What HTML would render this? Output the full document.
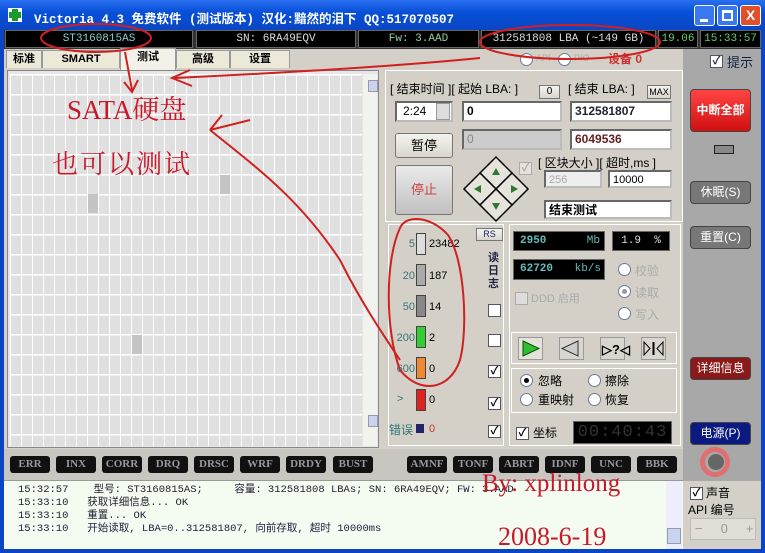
<!DOCTYPE html>
<html><head><meta charset="utf-8"><style>
*{margin:0;padding:0;box-sizing:border-box}
body{width:765px;height:553px;overflow:hidden;background:#d4d0c8;font-family:"Liberation Sans","Noto Sans CJK SC",sans-serif;font-size:12px;position:relative}
.a{position:absolute}
.blk{position:absolute;background:#000;color:#bbb;font-family:"Liberation Mono","Noto Sans CJK SC",monospace;font-size:11px;text-align:center;line-height:17px;height:18px;border:1px solid #666}
.tab{position:absolute;top:50px;height:18px;background:#ece9d8;border:1px solid #999;border-bottom:none;font-weight:bold;font-size:11px;text-align:center;line-height:17px}
.inp{position:absolute;background:#fff;border:2px inset #bbb;font-weight:bold;font-size:12px;line-height:16px;padding-left:3px}
.btn{position:absolute;background:linear-gradient(#f4f4f0,#d8d6ce);border:1px solid #777;border-radius:3px;text-align:center;font-size:13px}
.rb{position:absolute;border-radius:4px;color:#fff;text-align:center;font-size:12px;border:1px solid #444}
.st{position:absolute;top:456px;height:17px;width:40px;background:#111;border-radius:3px;color:#999;font-weight:bold;font-family:"Liberation Serif",serif;font-size:11px;text-align:center;line-height:17px}
.rad{position:absolute;width:13px;height:13px;border-radius:50%;background:#fff;border:1px solid #6a7a9a}
.cb{position:absolute;width:13px;height:13px;background:#fff;border:1px solid #556;font-size:11px;line-height:11px;text-align:center;font-weight:bold}
.red{position:absolute;color:#c8182a;font-family:"Liberation Serif","Noto Serif CJK SC",serif}
</style></head><body>
<div class="a" style="left:0;top:0;width:765px;height:30px;background:linear-gradient(#2a6ff0,#0750d8 40%,#0a46c4)"></div>
<div class="a" style="left:8px;top:8px;width:14px;height:14px;background:#fff"></div>
<div class="a" style="left:12px;top:9px;width:6px;height:12px;background:#1a9a2a"></div>
<div class="a" style="left:9px;top:12px;width:12px;height:6px;background:#1a9a2a"></div>
<div class="a" style="left:34px;top:8px;color:#fff;font-weight:bold;font-size:12.5px;font-family:'Liberation Mono','Noto Sans CJK SC',monospace;white-space:nowrap">Victoria 4.3 免费软件 (测试版本) 汉化:黯然的泪下 QQ:517070507</div>
<div class="a" style="left:694px;top:5px;width:21px;height:21px;background:#3a78f0;border:1px solid #fff;border-radius:3px"><div class="a" style="left:5px;top:13px;width:8px;height:3px;background:#fff"></div></div>
<div class="a" style="left:717px;top:5px;width:21px;height:21px;background:#3a78f0;border:1px solid #fff;border-radius:3px"><div class="a" style="left:4px;top:4px;width:11px;height:11px;border:2px solid #fff;border-top-width:3px"></div></div>
<div class="a" style="left:740px;top:5px;width:21px;height:21px;background:#e0502a;border:1px solid #fff;border-radius:3px;color:#fff;font-weight:bold;text-align:center;line-height:19px;font-size:14px">X</div>
<div class="a" style="left:0;top:30px;width:4px;height:523px;background:#0a46c4"></div>
<div class="a" style="left:761px;top:30px;width:4px;height:523px;background:#0a46c4"></div>
<div class="a" style="left:0;top:549px;width:765px;height:4px;background:#0a46c4"></div>
<div class="a" style="left:4px;top:30px;width:757px;height:19px;background:#333"></div>
<div class="blk" style="left:5px;top:30px;width:188px;color:#8cc">ST3160815AS</div>
<div class="blk" style="left:196px;top:30px;width:160px;color:#ddd">SN: 6RA49EQV</div>
<div class="blk" style="left:358px;top:30px;width:121px;color:#9c9">Fw: 3.AAD</div>
<div class="blk" style="left:481px;top:30px;width:175px;color:#ddd">312581808 LBA (~149 GB)</div>
<div class="blk" style="left:658px;top:30px;width:40px;color:#6c6">19.06</div>
<div class="blk" style="left:700px;top:30px;width:61px;color:#6c6">15:33:57</div>
<div class="tab" style="left:6px;width:36px">标准</div>
<div class="tab" style="left:42px;width:78px">SMART</div>
<div class="tab" style="left:120px;width:56px;top:48px;height:22px;background:#f4f2e8">测试</div>
<div class="tab" style="left:176px;width:54px">高级</div>
<div class="tab" style="left:230px;width:60px">设置</div>
<div class="rad" style="left:520px;top:53px"></div><div class="a" style="left:536px;top:53px;color:#aaa;font-size:9px">API</div>
<div class="rad" style="left:558px;top:53px"></div><div class="a" style="left:574px;top:53px;color:#aaa;font-size:9px">PIO</div>
<div class="a" style="left:608px;top:50px;color:#c33;font-weight:bold;font-size:12px">设备 0</div>
<div class="a" style="left:683px;top:49px;width:78px;height:432px;background:#a8a8a8"></div>
<div class="cb" style="left:710px;top:55px;color:#224">✓</div><div class="a" style="left:727px;top:52px;color:#124;font-size:13px">提示</div>
<div class="a" style="left:7px;top:70px;width:372px;height:378px;border:1px solid #888;background:#e6e6e6"></div>
<div class="a" style="left:10px;top:74px;width:352px;height:372px;background-color:#e0e0e0;background-image:linear-gradient(90deg,#fff 1px,transparent 1px),linear-gradient(#fff 1.5px,transparent 1.5px);background-size:11px 100%,100% 20px"></div>
<div class="a" style="left:220px;top:175px;width:10px;height:19px;background:#c4c4c4"></div>
<div class="a" style="left:88px;top:194px;width:10px;height:19px;background:#c4c4c4"></div>
<div class="a" style="left:132px;top:335px;width:10px;height:19px;background:#c4c4c4"></div>
<div class="a" style="left:363px;top:74px;width:14px;height:372px;background:#f2f2ee"></div>
<div class="a" style="left:368px;top:80px;width:10px;height:12px;background:#c8d4f0;border:1px solid #99a"></div>
<div class="a" style="left:368px;top:415px;width:10px;height:12px;background:#c8d4f0;border:1px solid #99a"></div>
<div class="a" style="left:385px;top:70px;width:298px;height:152px;border:1px solid #fff;background:#d4d0c8"></div>
<div class="a" style="left:390px;top:80px;font-size:12px;white-space:nowrap">[ 结束时间 ][ 起始 LBA: ]</div>
<div class="btn" style="left:539px;top:85px;width:21px;height:14px;font-size:10px;line-height:12px;border-radius:0">0</div>
<div class="a" style="left:568px;top:80px;font-size:12px;white-space:nowrap">[ 结束 LBA: ]</div>
<div class="btn" style="left:647px;top:85px;width:24px;height:14px;font-size:9px;line-height:12px;border-radius:0">MAX</div>
<div class="inp" style="left:395px;top:101px;width:58px;height:21px;font-weight:normal;padding-left:6px">2:24</div>
<div class="a" style="left:436px;top:103px;width:14px;height:17px;background:#ddd;border:1px solid #999"></div>
<div class="inp" style="left:462px;top:101px;width:100px;height:21px">0</div>
<div class="inp" style="left:570px;top:101px;width:102px;height:21px;color:#223">312581807</div>
<div class="inp" style="left:462px;top:129px;width:100px;height:21px;background:#ccc;color:#888;font-weight:normal">0</div>
<div class="inp" style="left:570px;top:129px;width:102px;height:21px;color:#622">6049536</div>
<div class="btn" style="left:395px;top:133px;width:58px;height:25px;line-height:23px">暂停</div>
<div class="btn" style="left:395px;top:165px;width:58px;height:50px;line-height:48px;color:#c44;background:linear-gradient(#eaeaea,#c0c0c0)">停止</div>
<svg class="a" style="left:462px;top:155px" width="68" height="68"><g stroke="#000" stroke-width="1.5" fill="#e6e4dc"><polygon points="34,2 50,18 34,34 18,18"/><polygon points="18,18 34,34 18,50 2,34"/><polygon points="50,18 66,34 50,50 34,34"/><polygon points="34,34 50,50 34,66 18,50"/></g><g fill="#2a7a2a"><polygon points="34,13 30,20 38,20"/><polygon points="12,34 19,30 19,38"/><polygon points="56,34 49,30 49,38"/><polygon points="34,55 30,48 38,48"/></g></svg>
<div class="cb" style="left:519px;top:162px;background:#e4e2dc;color:#aaa;border-color:#aaa">✓</div>
<div class="a" style="left:538px;top:154px;font-size:12px;white-space:nowrap">[ 区块大小 ][ 超时,ms ]</div>
<div class="inp" style="left:544px;top:170px;width:58px;height:18px;background:#eee;color:#aaa;font-weight:normal;font-size:11px">256</div>
<div class="inp" style="left:608px;top:170px;width:64px;height:18px;font-weight:normal;font-size:11px">10000</div>
<div class="inp" style="left:544px;top:200px;width:128px;height:19px;font-size:12px">结束测试</div>
<div class="a" style="left:388px;top:224px;width:116px;height:222px;border:1px solid #fff"></div>
<div class="btn" style="left:476px;top:228px;width:27px;height:13px;font-size:9px;line-height:11px;border-radius:0;color:#226">RS</div>
<div class="a" style="left:395px;top:238px;font-size:11px;line-height:12px;width:20px;text-align:right;color:#377">5</div>
<div class="a" style="left:416px;top:233px;width:10px;height:22px;background:#ddd;border:1px solid #444"></div><div class="a" style="left:429px;top:238px;font-size:11px">23482</div>
<div class="a" style="left:395px;top:270px;font-size:11px;width:20px;text-align:right;color:#377">20</div>
<div class="a" style="left:416px;top:264px;width:10px;height:22px;background:#aaa;border:1px solid #444"></div><div class="a" style="left:429px;top:270px;font-size:11px">187</div>
<div class="a" style="left:395px;top:301px;font-size:11px;width:20px;text-align:right;color:#377">50</div>
<div class="a" style="left:416px;top:295px;width:10px;height:22px;background:#888;border:1px solid #444"></div><div class="a" style="left:429px;top:301px;font-size:11px">14</div>
<div class="a" style="left:392px;top:332px;font-size:11px;width:23px;text-align:right;color:#377">200</div>
<div class="a" style="left:416px;top:326px;width:10px;height:22px;background:#3c3;border:1px solid #444"></div><div class="a" style="left:429px;top:332px;font-size:11px">2</div>
<div class="a" style="left:392px;top:363px;font-size:11px;width:23px;text-align:right;color:#377">600</div>
<div class="a" style="left:416px;top:357px;width:10px;height:22px;background:#e83;border:1px solid #444"></div><div class="a" style="left:429px;top:363px;font-size:11px">0</div>
<div class="a" style="left:397px;top:393px;font-size:11px;color:#377">&gt;</div>
<div class="a" style="left:416px;top:389px;width:10px;height:22px;background:#d22;border:1px solid #444"></div><div class="a" style="left:429px;top:394px;font-size:11px">0</div>
<div class="a" style="left:389px;top:421px;font-size:12px;color:#377">错误</div>
<div class="a" style="left:416px;top:424px;width:8px;height:9px;background:#226"></div><div class="a" style="left:429px;top:423px;font-size:11px;color:#c33">0</div>
<div class="a" style="left:488px;top:252px;width:12px;font-size:11px;line-height:13px;color:#224;font-weight:bold">读日志</div>
<div class="cb" style="left:488px;top:304px"></div>
<div class="cb" style="left:488px;top:334px"></div>
<div class="cb" style="left:488px;top:365px">✓</div>
<div class="cb" style="left:488px;top:397px">✓</div>
<div class="cb" style="left:488px;top:425px">✓</div>
<div class="a" style="left:509px;top:224px;width:172px;height:222px;border:1px solid #fff"></div>
<div class="blk" style="left:513px;top:231px;width:92px;height:20px;text-align:left;padding-left:6px;color:#6bb;font-weight:bold;line-height:18px">2950<span style="float:right;padding-right:4px;font-weight:normal">Mb</span></div>
<div class="blk" style="left:612px;top:231px;width:58px;height:20px;color:#ddd;line-height:18px">1.9 &nbsp;%</div>
<div class="blk" style="left:513px;top:259px;width:92px;height:21px;text-align:left;padding-left:6px;color:#6bb;font-weight:bold;line-height:19px">62720<span style="float:right;padding-right:3px;font-weight:normal">kb/s</span></div>
<div class="rad" style="left:618px;top:263px"></div><div class="a" style="left:635px;top:262px;color:#aaa">校验</div>
<div class="rad" style="left:618px;top:285px"><div class="a" style="left:3px;top:3px;width:5px;height:5px;border-radius:50%;background:#999"></div></div><div class="a" style="left:635px;top:284px;color:#aaa">读取</div>
<div class="rad" style="left:618px;top:307px"></div><div class="a" style="left:635px;top:306px;color:#aaa">写入</div>
<div class="cb" style="left:515px;top:292px;background:#ddd;border-color:#aaa"></div><div class="a" style="left:531px;top:290px;color:#aaa;font-size:11px">DDD 启用</div>
<div class="a" style="left:511px;top:332px;width:166px;height:32px;border:1px solid #fff"></div>
<svg class="a" style="left:518px;top:337px" width="160" height="24"><rect x="0.5" y="0.5" width="24" height="22" fill="#e4e2da" stroke="#999"/><polygon points="5,4 21,11.5 5,19" fill="#3b3" stroke="#050"/>
<rect x="41.5" y="0.5" width="24" height="22" fill="#d8d6ce" stroke="#999"/><polygon points="60,4 44,11.5 60,19" fill="#ccc" stroke="#333"/>
<rect x="82.5" y="0.5" width="24" height="22" fill="#d8d6ce" stroke="#999"/><text x="84" y="17" font-size="13" font-family="Liberation Sans" font-weight="bold">▷?◁</text>
<rect x="123.5" y="0.5" width="24" height="22" fill="#d8d6ce" stroke="#999"/><polygon points="126,5 132,11.5 126,18" fill="none" stroke="#000"/><line x1="135.5" y1="5" x2="135.5" y2="18" stroke="#000" stroke-width="2"/><polygon points="145,5 139,11.5 145,18" fill="none" stroke="#000"/></svg>
<div class="a" style="left:511px;top:368px;width:166px;height:45px;border:1px solid #fff"></div>
<div class="rad" style="left:520px;top:374px"><div class="a" style="left:3px;top:3px;width:5px;height:5px;border-radius:50%;background:#000"></div></div><div class="a" style="left:538px;top:372px;font-size:12px">忽略</div>
<div class="rad" style="left:588px;top:374px"></div><div class="a" style="left:605px;top:372px;font-size:12px">擦除</div>
<div class="rad" style="left:520px;top:393px"></div><div class="a" style="left:538px;top:391px;font-size:12px">重映射</div>
<div class="rad" style="left:588px;top:393px"></div><div class="a" style="left:605px;top:391px;font-size:12px">恢复</div>
<div class="cb" style="left:516px;top:427px">✓</div><div class="a" style="left:533px;top:424px;font-size:12px">坐标</div>
<div class="blk" style="left:573px;top:421px;width:99px;height:23px;color:#333;font-size:17px;line-height:21px;letter-spacing:1px">00:40:43</div>
<div class="rb" style="left:690px;top:89px;width:61px;height:43px;background:linear-gradient(#f44,#d01010);line-height:41px;font-weight:bold">中断全部</div>
<div class="a" style="left:714px;top:145px;width:20px;height:9px;background:#888;border:1px solid #222"></div>
<div class="rb" style="left:690px;top:181px;width:61px;height:23px;background:#777;line-height:21px">休眠(S)</div>
<div class="rb" style="left:690px;top:226px;width:61px;height:23px;background:#777;line-height:21px">重置(C)</div>
<div class="rb" style="left:690px;top:357px;width:61px;height:23px;background:#8a1a1a;line-height:21px">详细信息</div>
<div class="rb" style="left:690px;top:422px;width:61px;height:23px;background:#0b1a80;line-height:21px">电源(P)</div>
<div class="a" style="left:700px;top:447px;width:30px;height:30px;border-radius:50%;border:5px solid #e07070"></div>
<div class="a" style="left:708px;top:454px;width:16px;height:16px;border-radius:50%;background:#666"></div>
<div class="a" style="left:683px;top:481px;width:78px;height:68px;background:#d4d0c8"></div>
<div class="cb" style="left:690px;top:487px">✓</div><div class="a" style="left:706px;top:484px;font-size:12px">声音</div>
<div class="a" style="left:688px;top:501px;font-size:12px;white-space:nowrap">API 编号</div>
<div class="a" style="left:690px;top:518px;width:66px;height:22px;border:1px solid #bbb;background:#e0ded6;color:#999;font-size:13px;line-height:20px"><span style="padding-left:4px">−</span><span style="padding-left:18px">0</span><span style="padding-left:18px">+</span></div>
<div class="a" style="left:4px;top:449px;width:679px;height:31px;background:#c8c6c0"></div>
<div class="st" style="left:10px">ERR</div><div class="st" style="left:56px">INX</div><div class="st" style="left:102px">CORR</div><div class="st" style="left:148px">DRQ</div><div class="st" style="left:194px">DRSC</div><div class="st" style="left:240px">WRF</div><div class="st" style="left:286px">DRDY</div><div class="st" style="left:333px">BUST</div>
<div class="st" style="left:407px">AMNF</div><div class="st" style="left:453px">TONF</div><div class="st" style="left:499px">ABRT</div><div class="st" style="left:545px">IDNF</div><div class="st" style="left:591px">UNC</div><div class="st" style="left:637px">BBK</div>
<div class="a" style="left:4px;top:480px;width:679px;height:69px;background:#f4fbf0;border-top:1px solid #999;font-family:'Liberation Mono','Noto Sans CJK SC',monospace;font-size:10.5px;line-height:13px;padding:3px 0 0 14px;white-space:pre;color:#223">15:32:57    型号: ST3160815AS;     容量: 312581808 LBAs; SN: 6RA49EQV; FW: 3.AAD
15:33:10   获取详细信息... OK
15:33:10   重置... OK
<span style="color:#224">15:33:10   开始读取, LBA=0..312581807, 向前存取, 超时 10000ms</span></div>
<div class="a" style="left:666px;top:481px;width:16px;height:68px;background:#eef"></div>
<div class="a" style="left:667px;top:528px;width:14px;height:16px;background:#c8d4f0;border:1px solid #99a"></div>
<svg class="a" style="left:0;top:0" width="765" height="553" fill="none" stroke="#d02020" stroke-width="2">
<ellipse cx="96" cy="38" rx="55" ry="14"/>
<ellipse cx="570" cy="42" rx="90" ry="17"/>
<path d="M125 52 L132 90 M124 82 L132 92 L138 80"/>
<path d="M480 58 C400 66 300 72 175 78 M190 70 L172 78 L192 86"/>
<path d="M210 130 L250 120 M210 130 L222 115 M210 130 C260 170 300 200 340 260 C360 300 380 330 400 360"/>
<path d="M400 228 C385 260 385 330 400 370 C420 395 450 390 460 360 C468 330 465 260 448 235 C430 215 405 215 400 228"/>
</svg>
<div class="red" style="left:67px;top:88px;font-size:27px">SATA硬盘</div>
<div class="red" style="left:52px;top:144px;font-size:26px;letter-spacing:2px">也可以测试</div>
<div class="red" style="left:482px;top:470px;font-size:25px">By: xplinlong</div>
<div class="red" style="left:498px;top:522px;font-size:26px">2008-6-19</div>
</body></html>
